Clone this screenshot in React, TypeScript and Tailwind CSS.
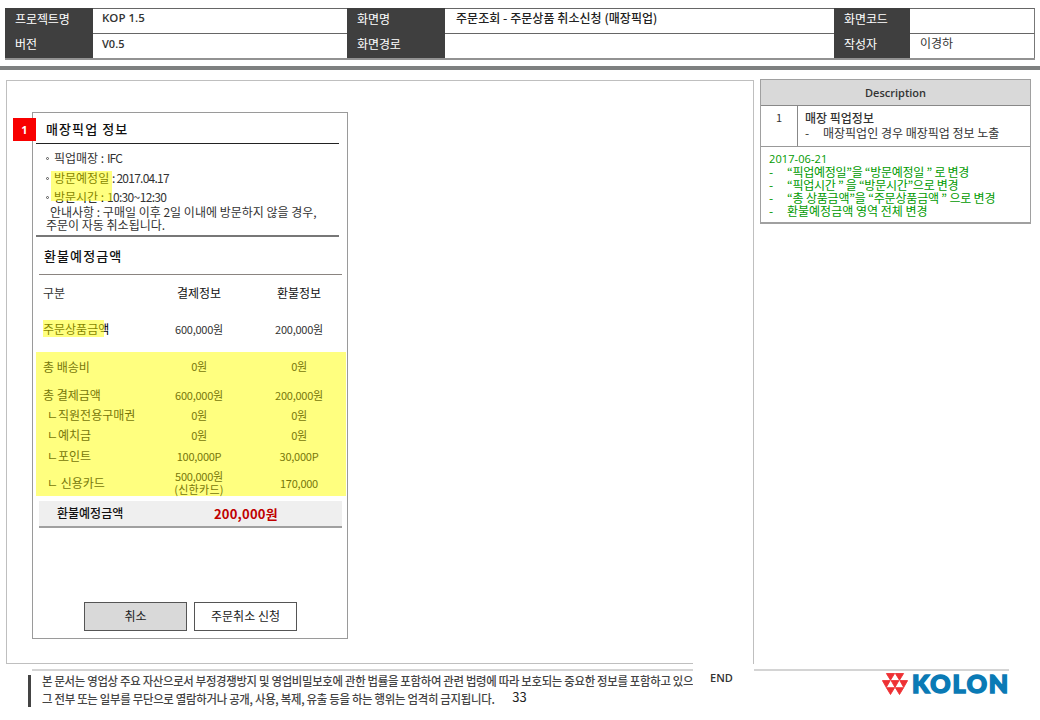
import type { ReactNode } from "react";

const kr = "font-['Noto_Sans_CJK_KR',sans-serif]";

function HeadLabel({ children }: { children?: ReactNode }) {
  return (
    <div className="flex h-[25px] items-center bg-[#3f3f3f] pl-[10px] text-[12px] tracking-[-0.1px] text-white">
      <span className="relative -top-[2px]">{children}</span>
    </div>
  );
}

function HeadValue({ children, last }: { children?: ReactNode; last?: boolean }) {
  return (
    <div
      className={
        "flex h-[25px] items-center border-t border-[#666] text-[#333] " +
        (last ? "border-r border-r-[#777] pl-[10px]" : "pl-[9px]")
      }
    >
      <span className="relative -top-[3px]">{children}</span>
    </div>
  );
}

function Row({ label, paid, refund, className, sub }: { label: ReactNode; paid: ReactNode; refund: ReactNode; className: string; sub?: boolean }) {
  return (
    <div className={"grid shrink-0 grid-cols-[106px_100px_100px] items-center " + className}>
      <span className={sub ? "pl-[4px]" : ""}>{label}</span>
      <span className="text-center text-[11px] leading-[13px] tracking-[-0.25px]">{paid}</span>
      <span className="text-center text-[11px] leading-[13px] tracking-[-0.25px]">{refund}</span>
    </div>
  );
}

function Bullet() {
  return <span className="mr-[5px] inline-block h-[3px] w-[3px] rounded-full border border-[#555] align-[3px]" />;
}

function Note({ children }: { children: ReactNode }) {
  return (
    <p className="flex">
      <span className="w-[18px]">-</span>
      <span>{children}</span>
    </p>
  );
}

function Logo() {
  return (
    <svg className="shrink-0" width="26" height="22" viewBox="0 0 26 22" fill="#ee3134" stroke="#ee3134" strokeWidth="0.9" strokeLinejoin="round">
      <path d="M4.4 0.5h8.2L8.5 7.2zM13.4 0.5h8.2l-4.1 6.7zM0.4 7.6h7.8L4.3 14.4zM9.1 7.6h7.8L13 14.4zM17.8 7.6h7.8l-3.9 6.8zM4.4 14.7h8.2l-4.1 6.8zM13.4 14.7h8.2l-4.1 6.8z" />
    </svg>
  );
}

export default function App() {
  return (
    <div className={"relative flex h-[720px] w-[1040px] flex-col overflow-hidden bg-white leading-none whitespace-nowrap text-[#333] " + kr}>
      <header className="ml-[5px] mt-[8px] grid h-[52px] w-[1030px] shrink-0 grid-cols-[88px_254px_98px_389px_76px_125px] border-b-2 border-[#929292] text-[11px]">
        <HeadLabel>프로젝트명</HeadLabel>
        <HeadValue><b className="font-['Open_Sans'] text-[11.5px] font-semibold">KOP 1.5</b></HeadValue>
        <HeadLabel>화면명</HeadLabel>
        <HeadValue><span className="ml-[2px] text-[12px] font-medium tracking-[0.05px] text-[#222]">주문조회 - 주문상품 취소신청 (매장픽업)</span></HeadValue>
        <HeadLabel>화면코드</HeadLabel>
        <HeadValue last />
        <HeadLabel>버전</HeadLabel>
        <HeadValue><b className="font-['Open_Sans'] font-semibold">V0.5</b></HeadValue>
        <HeadLabel>화면경로</HeadLabel>
        <HeadValue />
        <HeadLabel>작성자</HeadLabel>
        <HeadValue last><span className="text-[12px]">이경하</span></HeadValue>
      </header>

      <div className="mt-[6px] h-[4px] shrink-0 bg-[#7e8080]" />

      <div className="flex h-[594px] shrink-0">
        <main className="ml-[6px] mt-[10px] h-[584px] w-[748px] border border-[#bfbfbf] pl-[25px] pt-[31px]">
          <section className="relative flex h-[527px] w-[316px] flex-col border border-[#9a9a9a] pl-[3px] text-[12px]">
            <div className="absolute -left-[20px] top-[5px] flex h-[23px] w-[23px] items-center justify-center bg-[#f80000] font-['Open_Sans'] text-[11px] font-bold text-white">1</div>

            <h2 className="flex h-[31px] w-[303px] shrink-0 items-center border-b border-[#222] pl-[10px] text-[13px] font-medium tracking-[1.1px] text-[#111]">매장픽업 정보</h2>

            <div className="relative h-[91px] shrink-0 pl-[10px] pt-[4px]">
              <p className="h-[20px] leading-[20px]"><Bullet />픽업매장 : <span className="tracking-[-0.8px]">IFC</span></p>
              <p className="h-[20px] leading-[19px]"><Bullet /><span className="text-black">방문예정일</span> <span className="tracking-[-0.75px]">: 2017.04.17</span></p>
              <p className="h-[17px] leading-[18px]"><Bullet /><span className="text-black">방문시간 :</span> <span className="tracking-[-0.65px]">10:30~12:30</span></p>
              <p className="h-[13px] pl-[4px] leading-[13px]">안내사항 : 구매일 이후 2일 이내에 방문하지 않을 경우,</p>
              <p className="h-[13px] leading-[13px]">주문이 자동 취소됩니다.</p>
              <div className="absolute left-[15px] top-[27px] h-[30px] w-[61px] bg-[#ffff00]/50" />
            </div>
            <div className="h-[2px] w-[303px] shrink-0 bg-[#777]" />

            <h2 className="ml-[3px] flex h-[38px] w-[303px] shrink-0 items-center border-b border-[#8a8480] pl-[5px] text-[13px] font-medium tracking-[1.1px] text-[#111]">환불예정금액</h2>

            <Row className="h-[36px] pl-[7px]" label="구분" paid={<span className="text-[12px] tracking-normal text-[#111]">결제정보</span>} refund={<span className="text-[12px] tracking-normal text-[#111]">환불정보</span>} />
            <div className="relative">
              <Row className="h-[36px] pl-[7px]" label={<span className="text-black">주문상품금액</span>} paid="600,000원" refund="200,000원" />
              <div className="absolute left-[7px] top-[9px] h-[17px] w-[61px] bg-[#ffff00]/50" />
            </div>

            <div className="mt-[5px] flex h-[144px] w-[310px] shrink-0 flex-col bg-[#ffff7f] pl-[7px] text-[#77770a]">
              <Row className="h-[29px]" label="총 배송비" paid="0원" refund="0원" />
              <Row className="mt-[4px] h-[20px]" label="총 결제금액" paid="600,000원" refund="200,000원" />
              <Row sub className="h-[20px]" label="ㄴ직원전용구매권" paid="0원" refund="0원" />
              <Row sub className="h-[20px]" label="ㄴ예치금" paid="0원" refund="0원" />
              <Row sub className="h-[22px]" label="ㄴ포인트" paid="100,000P" refund="30,000P" />
              <Row sub className="mt-[3px] h-[26px]" label="ㄴ 신용카드" paid={<>500,000원<br /><span className="tracking-[0.3px]">(신한카드)</span></>} refund="170,000" />
            </div>

            <div className="ml-[3px] mt-[5px] flex h-[27px] w-[303px] shrink-0 items-center border-b-2 border-[#a0a0a0] bg-[#efefef]">
              <span className="relative -top-px w-[175px] pl-[18px] text-[12px] font-medium text-[#111]">환불예정금액</span>
              <span className="text-[13px] font-bold tracking-[0.2px] text-[#c00000]">200,000원</span>
            </div>

            <div className="ml-[48px] mt-[74px] flex gap-[7px] text-[12px] text-[#222]">
              <button className="flex h-[29px] w-[103px] items-center justify-center border border-[#555] bg-[#d9d9d9] pb-[2px]">취소</button>
              <button className="flex h-[29px] w-[103px] items-center justify-center border border-[#555] pb-[2px]">주문취소 신청</button>
            </div>
          </section>
        </main>

        <aside className="ml-[6px] mt-[9px] h-[145px] w-[271px] border border-b-2 border-[#a0a0a0] text-[12px]">
          <div className="flex h-[26px] items-center justify-center border-b border-[#888] bg-[#d9d9d9] font-['Open_Sans'] text-[11px] font-semibold">Description</div>
          <div className="flex h-[41px] border-b border-[#999]">
            <div className="w-[37px] border-r border-[#888] pt-[6px] text-center text-[11px]">1</div>
            <div className="pl-[7px] pt-[4px] leading-[15px]">
              <p className="font-medium">매장 픽업정보</p>
              <p className="flex"><span className="w-[18px]">-</span>매장픽업인 경우 매장픽업 정보 노출</p>
            </div>
          </div>
          <div className="pl-[8px] pt-[5px] text-[12px] leading-[13px] text-[#009a00]">
            <p className="font-['Open_Sans'] text-[11px] tracking-[0.1px]">2017-06-21</p>
            <div className="tracking-[-0.27px]">
              <Note>“픽업예정일”을 “방문예정일 ” 로 변경</Note>
              <Note>“픽업시간 ” 을 “방문시간”으로 변경</Note>
            </div>
            <div className="tracking-[-0.18px]">
              <Note>“총 상품금액”을 “주문상품금액 ” 으로 변경</Note>
            </div>
            <Note>환불예정금액 영역 전체 변경</Note>
          </div>
        </aside>
      </div>

      <footer className="flex h-[56px] shrink-0 pl-[28px]">
        <div className="relative w-[665px] overflow-hidden">
          <div className="ml-[4px] mt-[5px] h-[2px] bg-[#d4d4d4]" />
          <div className="mt-[4px] flex h-[32px] border-l-[3px] border-[#444] pl-[11px] text-[12px] font-medium text-[#444]">
            <div className="leading-[18px] tracking-[-0.3px]">
              <p className="-mt-[3px] w-max origin-left scale-x-[0.947]">본 문서는 영업상 주요 자산으로서 부정경쟁방지 및 영업비밀보호에 관한 법률을 포함하여 관련 법령에 따라 보호되는 중요한 정보를 포함하고 있으</p>
              <p className="flex"><span className="origin-left scale-x-[0.95]">그 전부 또는 일부를 무단으로 열람하거나 공개, 사용, 복제, 유출 등을 하는 행위는 엄격히 금지됩니다.</span><span className="relative -top-[2px] -ml-[6px] text-[13px] font-normal tracking-normal text-[#222]">33</span></p>
            </div>
          </div>
        </div>
        <div className="relative -top-px h-[57px] w-[60px] bg-white pl-[17px] pt-[9px] font-['Open_Sans'] text-[11px] font-semibold">END</div>
        <div className="ml-px w-[255px] pt-[5px]">
          <div className="h-[2px] bg-[#d4d4d4]" />
          <div className="ml-[128px] mt-[2px] flex items-start gap-[4px]">
            <Logo />
            <span className="font-['Lato'] text-[25px] font-black leading-[20px] tracking-[1.8px] text-[#0a7ab5] [-webkit-text-stroke:1.6px_#0a7ab5]">KOLON</span>
          </div>
        </div>
      </footer>
    </div>
  );
}
